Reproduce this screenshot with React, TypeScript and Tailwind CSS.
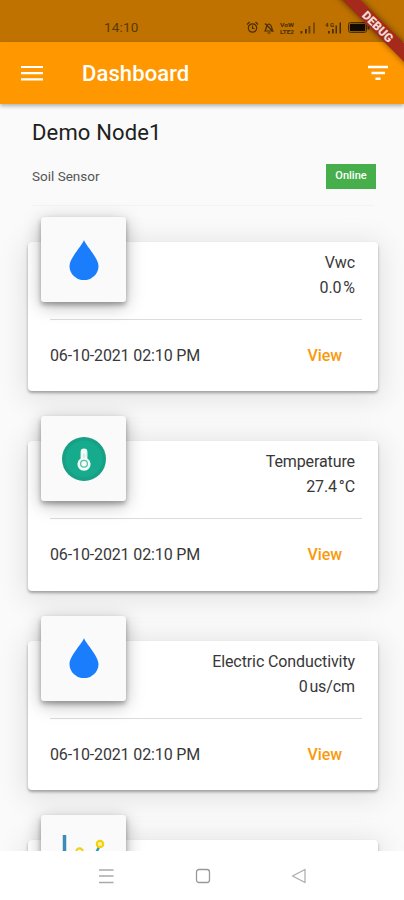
import type { ReactNode } from "react";

const DropIcon = () => (
  <svg className="h-10 w-[30px]" viewBox="0 0 30 40" fill="#1a7dfb">
    <path d="M15 0C14 4.500 0.500 18 0.500 26a14.500 14.200 0 0 0 29 0C29.500 18 16 4.500 15 0z" />
  </svg>
);

const ThermometerIcon = () => (
  <svg className="h-11 w-11" viewBox="0 0 44 44">
    <circle cx="22" cy="22" r="22" fill="#17a085" />
    <circle cx="22" cy="22" r="18.500" fill="#16ab8c" />
    <path d="M18.600 15a3.400 3.400 0 0 1 6.800 0v6.600a6.600 6.600 0 1 1-6.800 0z" fill="#f2fbf8" />
    <circle cx="22" cy="26.800" r="3.400" fill="none" stroke="#5dbfa9" strokeWidth="1.300" />
    <path d="M22 17v4M24 16h1.500M24 19h1.500" stroke="#b5e2d8" strokeWidth="1" />
  </svg>
);

const ChartIcon = () => (
  <svg className="h-11 w-11" viewBox="0 0 44 44" fill="none">
    <path d="M2.500 0v42H44" stroke="#3b8db8" strokeWidth="3.500" />
    <path d="M34.500 17l3-6" stroke="#2f9bb0" strokeWidth="2.500" />
    <circle cx="17.500" cy="16.500" r="3.200" stroke="#f5cf17" strokeWidth="2.200" />
    <circle cx="38" cy="9" r="3.200" fill="#fdf3a0" stroke="#f5d010" strokeWidth="2.200" />
  </svg>
);

interface Reading {
  name: string;
  value: string;
  icon: ReactNode;
}

const READINGS: Reading[] = [
  { name: "Vwc", value: "0.0 %", icon: <DropIcon /> },
  { name: "Temperature", value: "27.4 °C", icon: <ThermometerIcon /> },
  { name: "Electric Conductivity", value: "0 us/cm", icon: <DropIcon /> },
  { name: "", value: "", icon: <ChartIcon /> },
];

const StatusIcons = () => (
  <svg className="h-5 w-[130px]" viewBox="0 0 130 20" fill="none" stroke="#4a2f05" strokeWidth="1.200">
    {/* alarm */}
    <circle cx="8.500" cy="10" r="4.200" />
    <path d="M8.500 7.500v3h2M3 6.500l2.500-2.500M14 6.500l-2.500-2.500" />
    {/* muted bell */}
    <path d="M21 13h8c-1.500-2-1-6.500-4-7-3 0-2.500 5-4 7zM21 5.500l8 8M23.500 15h3" />
    <g fill="#4a2f05" stroke="none" fontFamily="Roboto, sans-serif" fontWeight="700">
      <text x="36" y="9" fontSize="5" textLength="14" lengthAdjust="spacingAndGlyphs">VoW</text>
      <text x="36" y="15.500" fontSize="5" textLength="14" lengthAdjust="spacingAndGlyphs">LTE2</text>
      <text x="81" y="9" fontSize="6" textLength="9">4G</text>
    </g>
    {/* signal bars */}
    <g fill="#4a2f05" stroke="none">
      <path d="M56.500 13h1.800v2.500h-1.800zM61 11h1.800v4.500H61z" />
      <path d="M64.500 8h1.800v7.500h-1.800zM69.300 4.500h1.500v11h-1.500z" opacity=".75" />
      <path d="M84 13h1.800v2.500H84zM88 11h1.800v4.500H88zM91.500 7.500h1.500v8h-1.500zM95.500 4.500H97v11h-1.500z" />
    </g>
    {/* battery */}
    <rect x="104.500" y="4.500" width="18" height="10" rx="2" strokeWidth="1" />
    <rect x="105.800" y="5.800" width="15.500" height="7.500" rx="1" fill="#120b02" stroke="none" />
    <path d="M124.500 7.500v4" strokeWidth="2" />
  </svg>
);

function SensorCard({ name, value, icon }: Reading) {
  return (
    <article className="relative mb-[50px] h-[149.3px] shrink-0 rounded-[4px] bg-white pr-4 pl-[22px] shadow-[0_2px_3px_rgba(0,0,0,0.32),0_4px_28px_4px_rgba(0,0,0,0.10)]">
      <div className="absolute -top-[25px] left-[13px] flex h-[85px] w-[85px] items-center justify-center rounded-[3px] bg-[#fafafa] shadow-[0_3px_5px_rgba(0,0,0,0.3),0_4px_18px_rgba(0,0,0,0.28)]">
        {icon}
      </div>
      <div className="flex h-[78px] flex-col items-end border-b border-[#dcdcdc] pt-[8px] pr-[7px] text-base leading-[25px] tracking-[-0.1px] text-[#383838]">
        <span>{name}</span>
        <span className="[word-spacing:-2px]">{value}</span>
      </div>
      {name && (
        <div className="flex h-[72px] items-center justify-between pr-5 text-base text-[#383838]">
          <time className="tracking-[-0.13px]">06-10-2021 02:10 PM</time>
          <button className="font-medium tracking-[-0.1px] text-[#f99a0c]">View</button>
        </div>
      )}
    </article>
  );
}

export default function App() {
  return (
    <div className="relative flex h-[900px] w-[404px] flex-col overflow-hidden bg-[#fafafa] font-[Roboto,sans-serif]">
      {/* Status bar */}
      <div className="flex h-[42px] shrink-0 items-start justify-between bg-[#bf7200] pt-[18px] pr-[30px] pl-[104px]">
        <span className="text-[13.5px] leading-[19px] tracking-[0.2px] text-[#5b3906]">14:10</span>
        <StatusIcons />
      </div>

      {/* App bar */}
      <header className="z-10 flex h-[62px] shrink-0 items-center bg-[#ff9800] pr-4 pl-[21px] shadow-[0_2px_4px_rgba(0,0,0,0.3)]">
        <svg className="h-4 w-[22px]" viewBox="0 0 22 16" stroke="white" strokeWidth="2.200">
          <path d="M0 2h22M0 8.200h22M0 14.300h22" />
        </svg>
        <h1 className="ml-[39px] flex-1 text-[22px] font-medium tracking-[0.1px] text-white">Dashboard</h1>
        <svg className="h-4 w-5" viewBox="0 0 20 16" stroke="white" strokeWidth="2.500">
          <path d="M0 2h20M3.500 8h13.500M7.500 13.800h5" />
        </svg>
      </header>

      <main className="flex min-h-0 flex-1 flex-col overflow-hidden pr-[26px] pl-7">
        <section className="mx-1 mb-[36px] h-[102px] shrink-0 border-b border-[#f3f3f3]">
          <h2 className="pt-[14px] text-[22px] leading-[30px] tracking-[0.15px] text-[#202020]">Demo Node1</h2>
          <div className="mt-[16px] flex items-center justify-between">
            <span className="text-[13.5px] text-[#555]">Soil Sensor</span>
            <span className="-mr-[2px] flex h-[25px] w-[50px] items-center justify-center bg-[#46af4b] text-[11px] font-medium text-white">
              Online
            </span>
          </div>
        </section>
        {READINGS.map((reading, i) => (
          <SensorCard key={i} {...reading} />
        ))}
      </main>

      {/* System navigation */}
      <nav className="z-10 flex h-[49px] shrink-0 items-center justify-between bg-white pr-24 pl-[97px]">
        <svg className="h-[18px] w-[18px]" viewBox="0 0 18 18" stroke="#aaa" strokeWidth="1.300">
          <path d="M2 3h14.500M2 9h14.500M2 15.500h14.500" />
        </svg>
        <svg className="h-[18px] w-[18px]" viewBox="0 0 18 18" fill="none" stroke="#999" strokeWidth="1.300">
          <rect x="2.500" y="2.500" width="13" height="13" rx="2.500" />
        </svg>
        <svg className="h-[18px] w-[18px]" viewBox="0 0 18 18" fill="none" stroke="#aaa" strokeWidth="1.200">
          <path d="M2.500 9L15 2.500v13z" strokeLinejoin="round" />
        </svg>
      </nav>

      {/* Debug ribbon */}
      <div className="absolute top-[20px] -right-[34px] z-20 flex h-[13px] w-[120px] rotate-45 items-center justify-center bg-[#a52a1c] text-[12px] leading-none font-black text-[#f0dcd8] shadow-[0_0_6px_rgba(0,0,0,0.5)]">
        DEBUG
      </div>
    </div>
  );
}
